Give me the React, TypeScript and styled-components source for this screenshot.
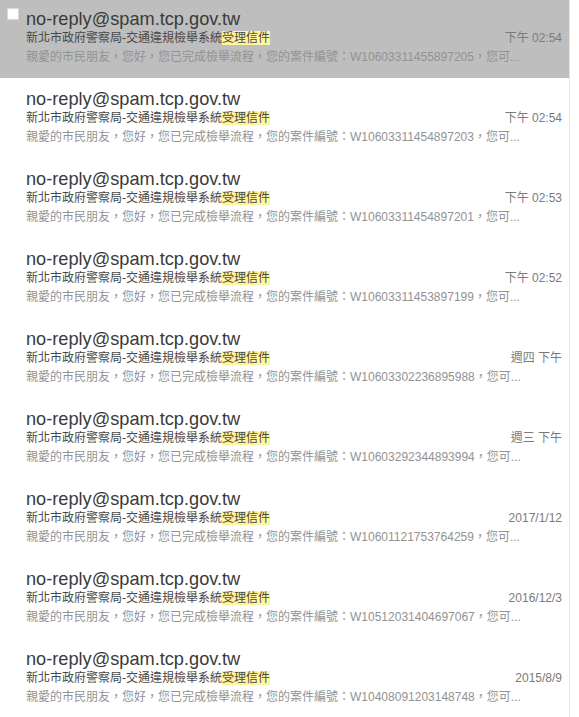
import React from "react";
import styled, { createGlobalStyle } from "styled-components";

const Global = createGlobalStyle`
  html, body { margin: 0; padding: 0; background: #ffffff; }
  body { font-family: "Liberation Sans", "Noto Sans CJK TC", sans-serif; overflow: hidden; }
`;

const List = styled.div`
  width: 569px;
  border-right: 1px solid #e3e3e3;
  min-height: 717px;
  background: #ffffff;
`;

const Row = styled.div<{ $selected?: boolean }>`
  position: relative;
  height: 78px;
  margin-bottom: 2px;
  box-sizing: border-box;
  padding: 8px 7px 0 26px;
  background: ${(p) => (p.$selected ? "#bebebe" : "transparent")};
`;

const Check = styled.span`
  position: absolute;
  left: 7px;
  top: 8px;
  width: 12px;
  height: 12px;
  background: #ffffff;
  border: 1px solid #d8d8d8;
  box-sizing: border-box;
`;

const Sender = styled.div`
  font-size: 18.2px;
  line-height: 22px;
  color: #3a3a3a;
  white-space: nowrap;
`;

const SubjectLine = styled.div`
  display: flex;
  justify-content: space-between;
  font-size: 12px;
  line-height: 16px;
  white-space: nowrap;
`;

const Subject = styled.span`
  color: #484848;
`;

const Mark = styled.span`
  background: #fff59a;
`;

const When = styled.span`
  color: #7a7a7a;
`;

const Preview = styled.div`
  margin-top: 3px;
  font-size: 12px;
  line-height: 17px;
  color: #929292;
  white-space: nowrap;
  overflow: hidden;
`;

const items = [
  { id: "W10603311455897205", date: "下午 02:54" },
  { id: "W10603311454897203", date: "下午 02:54" },
  { id: "W10603311454897201", date: "下午 02:53" },
  { id: "W10603311453897199", date: "下午 02:52" },
  { id: "W10603302236895988", date: "週四 下午" },
  { id: "W10603292344893994", date: "週三 下午" },
  { id: "W10601121753764259", date: "2017/1/12" },
  { id: "W10512031404697067", date: "2016/12/3" },
  { id: "W10408091203148748", date: "2015/8/9" },
];

export default function App() {
  return (
    <>
      <Global />
      <List>
        {items.map((it, i) => (
          <Row key={it.id} $selected={i === 0}>
            {i === 0 && <Check />}
            <Sender>no-reply@spam.tcp.gov.tw</Sender>
            <SubjectLine>
              <Subject>
                新北市政府警察局-交通違規檢舉系統<Mark>受理信件</Mark>
              </Subject>
              <When>{it.date}</When>
            </SubjectLine>
            <Preview>
              親愛的市民朋友，您好，您已完成檢舉流程，您的案件編號：{it.id}，您可...
            </Preview>
          </Row>
        ))}
      </List>
    </>
  );
}
